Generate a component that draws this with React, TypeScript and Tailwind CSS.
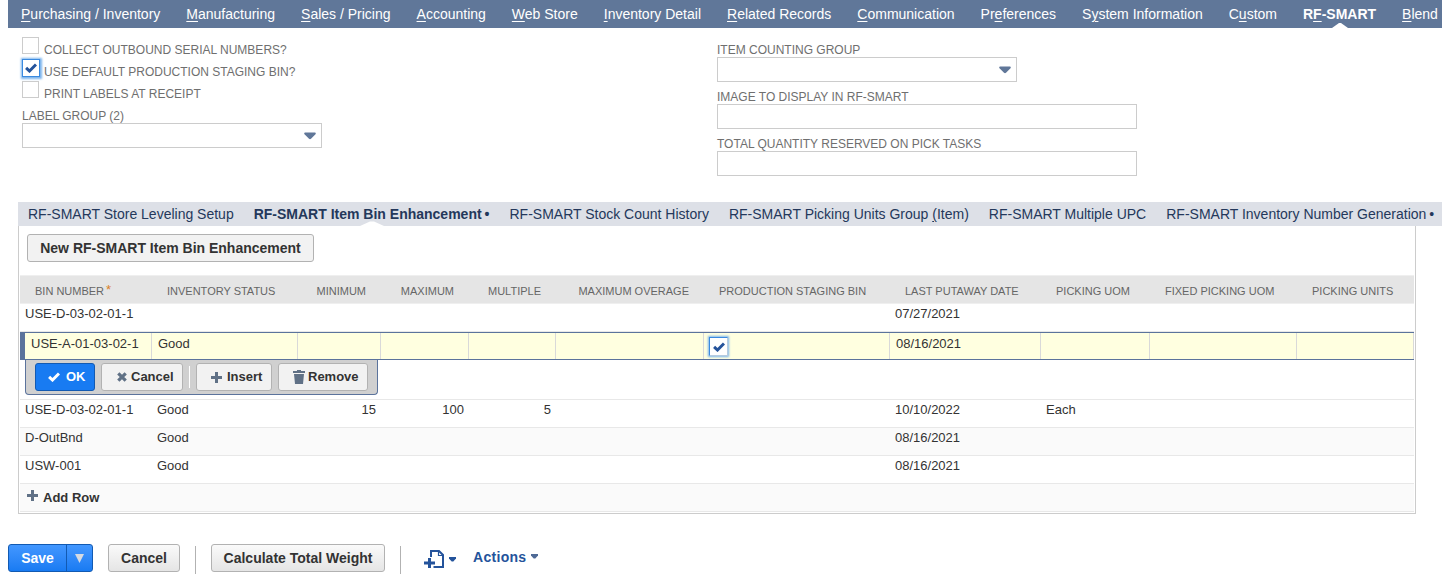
import React from "react";

const NAV: { pre: string; key: string; post: string; active?: boolean }[] = [
  { pre: "", key: "P", post: "urchasing / Inventory" },
  { pre: "", key: "M", post: "anufacturing" },
  { pre: "", key: "S", post: "ales / Pricing" },
  { pre: "", key: "A", post: "ccounting" },
  { pre: "", key: "W", post: "eb Store" },
  { pre: "", key: "I", post: "nventory Detail" },
  { pre: "", key: "R", post: "elated Records" },
  { pre: "", key: "C", post: "ommunication" },
  { pre: "Pr", key: "e", post: "ferences" },
  { pre: "S", key: "y", post: "stem Information" },
  { pre: "C", key: "u", post: "stom" },
  { pre: "R", key: "F", post: "-SMART", active: true },
  { pre: "", key: "B", post: "lend" },
];

const COLS =
  "grid grid-cols-[132px_146px_83px_88px_87px_148px_186px_151px_109px_147px_117px]";

const HEADERS = [
  "BIN NUMBER",
  "INVENTORY STATUS",
  "MINIMUM",
  "MAXIMUM",
  "MULTIPLE",
  "MAXIMUM OVERAGE",
  "PRODUCTION STAGING BIN",
  "LAST PUTAWAY DATE",
  "PICKING UOM",
  "FIXED PICKING UOM",
  "PICKING UNITS",
];

const isNumeric = (i: number) => i >= 2 && i <= 5;

function Check({ className = "" }: { className?: string }) {
  return (
    <svg width="12" height="10" viewBox="0 0 12 10" className={className}>
      <path d="M1.1 4.800 L4.5 8 L11 1.500" fill="none" stroke="currentColor" strokeWidth="3" />
    </svg>
  );
}

function Plus() {
  return (
    <svg width="11" height="11" viewBox="0 0 11 11" className="text-[#607186]">
      <path d="M4 0h3v4h4v3H7v4H4V7H0V4h4z" fill="currentColor" />
    </svg>
  );
}

function Caret() {
  return (
    <svg width="12" height="8" viewBox="0 0 12 8">
      <path d="M0.8 0.500h10.400q1 .6 .3 1.800L7 6.800q-1 .9-2 0L.5 2.300Q-.2 1.100 .8 .5z" fill="#607799" />
    </svg>
  );
}

function SmallCaret({ color }: { color: string }) {
  return (
    <svg width="7" height="5" viewBox="0 0 7 5">
      <path d="M0 0h7v1.6L4.3 4.6H2.7L0 1.6z" fill={color} />
    </svg>
  );
}

function CheckField({ label, checked }: { label: string; checked?: boolean }) {
  return (
    <div className="flex h-[22px] items-start">
      <span
        className={
          checked
            ? "flex h-[18px] w-[18px] items-center justify-center border border-[#3a8ae0] bg-white text-[#24539b] shadow-[0_0_2px_1.5px_#7db4ec]"
            : "h-[17px] w-[17px] border border-[#ccc] bg-white"
        }
      >
        {checked && <Check />}
      </span>
      <span className={`mt-[6px] text-[12px] leading-[15px] ${checked ? "ml-[4px]" : "ml-[5px]"}`}>{label}</span>
    </div>
  );
}

function Field({ label, select }: { label: string; select?: boolean }) {
  return (
    <div className="flex flex-col">
      <span className="h-[15px] text-[12px] leading-[17px]">{label}</span>
      <span
        className={
          select
            ? "flex h-[25px] w-[300px] items-center justify-end border border-[#ccc] pr-[5px]"
            : "h-[25px] w-[420px] border border-[#ccc]"
        }
      >
        {select && <Caret />}
      </span>
    </div>
  );
}

function Row({ cells, shade }: { cells: string[]; shade?: boolean }) {
  return (
    <div
      className={`${COLS} h-[28px] border-b border-[#e8e8e8] text-[13px] leading-[15px] text-[#333] ${
        shade ? "bg-[#fafafa]" : ""
      }`}
    >
      {cells.map((c, i) => (
        <span key={i} className={isNumeric(i) ? "pr-[5px] pt-[2px] text-right" : "pl-[5px] pt-[2px]"}>
          {c}
        </span>
      ))}
    </div>
  );
}

function ToolButton({ className, children }: { className: string; children: React.ReactNode }) {
  return (
    <button
      className={`flex h-[28px] items-center rounded-[3px] border border-[#b2b2b2] bg-[#f2f2f2] text-[13px] font-bold text-[#333] ${className}`}
    >
      {children}
    </button>
  );
}

function MainButton({ className, children }: { className: string; children: React.ReactNode }) {
  return (
    <button
      className={`h-[28px] rounded-[3px] border border-[#b2b2b2] bg-linear-to-b from-[#fafafa] to-[#e5e5e5] text-[14px] font-bold text-[#333] ${className}`}
    >
      {children}
    </button>
  );
}

const ACTIVE = ["USE-A-01-03-02-1", "Good", "", "", "", "", "check", "08/16/2021", "", "", ""];

export default function App() {
  return (
    <div className="h-[582px] w-[1442px] overflow-hidden bg-white font-['Liberation_Sans',Arial,sans-serif] text-[#6f6f6f]">
      <nav className="ml-2 flex h-7 gap-[26px] whitespace-nowrap bg-[#607799] pl-[13px] text-[14px] leading-[28px] text-white">
        {NAV.map((n) => (
          <a key={n.key + n.post} className={`relative ${n.active ? "font-bold" : ""}`}>
            {n.pre}
            <span className="underline underline-offset-2">{n.key}</span>
            {n.post}
            {n.active && (
              <svg width="16" height="5" viewBox="0 0 16 5" className="absolute bottom-0 left-[29px]">
                <path d="M0 5L7 0h2l7 5z" fill="#fff" />
              </svg>
            )}
          </a>
        ))}
      </nav>

      <section className="flex h-[174px] pl-[22px]">
        <div className="w-[695px] pt-[9px]">
          <CheckField label="COLLECT OUTBOUND SERIAL NUMBERS?" />
          <CheckField label="USE DEFAULT PRODUCTION STAGING BIN?" checked />
          <CheckField label="PRINT LABELS AT RECEIPT" />
          <div className="pt-[5px]">
            <Field label="LABEL GROUP (2)" select />
          </div>
        </div>
        <div className="flex flex-col gap-[7px] pt-[14px]">
          <Field label="ITEM COUNTING GROUP" select />
          <Field label="IMAGE TO DISPLAY IN RF-SMART" />
          <Field label="TOTAL QUANTITY RESERVED ON PICK TASKS" />
        </div>
      </section>

      <div className="ml-[18px] flex h-6 gap-5 whitespace-nowrap bg-[#dde0e7] pl-[10px] text-[14px] leading-[24px] text-[#24385b]">
        <a>RF-SMART Store Leveling Setup</a>
        <a className="relative pr-px font-bold">
          RF-SMART Item Bin Enhancement<span className="pl-[3px]">•</span>
          <svg width="24" height="5" viewBox="0 0 24 5" className="absolute bottom-0 left-[106px]">
            <path d="M0 5L10 0.4h4L24 5z" fill="#fff" />
          </svg>
        </a>
        <a className="-ml-px">RF-SMART Stock Count History</a>
        <a>
          RF-SMART Picking Units Group <span className="underline underline-offset-2">(</span>Item)
        </a>
        <a>RF-SMART Multiple UPC</a>
        <a>
          RF-SMART Inventory Number Generation<span className="pl-[3px]">•</span>
        </a>
      </div>

      <section className="ml-[18px] h-[288px] w-[1398px] border-x border-b border-[#ccc] px-[1px]">
        <div className="h-[49px] pl-[7px] pt-[8px]">
          <button className="h-[28px] w-[287px] rounded-[3px] border border-[#b2b2b2] bg-[#f2f2f2] text-[14px] font-bold text-[#333]">
            New RF-SMART Item Bin Enhancement
          </button>
        </div>
        <div
          className={`${COLS} h-[29px] border-y border-[#efefef] bg-[#e5e5e5] text-[11px] leading-[13px] text-[#666]`}
        >
          {HEADERS.map((h, i) => (
            <span
              key={h}
              className={`whitespace-nowrap pt-[9px] ${
                isNumeric(i) ? "pr-[15px] text-right" : "flex items-start pl-[15px]"
              }`}
            >
              {h}
              {i === 0 && <span className="-mt-[2px] pl-[2px] text-[13px] leading-[13px] text-[#d98026]">*</span>}
            </span>
          ))}
        </div>
        <Row cells={["USE-D-03-02-01-1", "", "", "", "", "", "", "07/27/2021", "", "", ""]} />
        <div
          className={`${COLS} h-[28px] w-[1394px] border-y border-[#5b739c] bg-[#ffffe0] text-[13px] leading-[15px] text-[#333]`}
        >
          {ACTIVE.map((c, i) => (
            <span
              key={i}
              className={`whitespace-nowrap border-r border-[#d9d9d9] pt-[3px] ${
                i === 0 ? "border-l-[5px] border-l-[#5b739c] pl-[6px]" : "pl-[6px]"
              }`}
            >
              {c === "check" ? (
                <span className="mt-px -ml-px flex h-[19px] w-[19px] items-center justify-center border border-[#b5cbe0] border-l-[#3a8ae0] border-t-[#3a8ae0] bg-white text-[#24539b] shadow-[0_0_2px_1px_#7db4ec]">
                  <Check />
                </span>
              ) : (
                c
              )}
            </span>
          ))}
        </div>
        <div className="h-[40px] border-b border-[#e8e8e8]">
          <div className="ml-[5px] flex h-[35px] w-[353px] rounded-b-[4px] border border-t-0 border-[#5b739c] bg-[#d0d0d0] pl-[9px] pt-[3px]">
            <button className="flex h-[28px] w-[60px] items-center rounded-[3px] border border-[#125ab2] bg-[#187bf2] pl-[12px] text-[13px] font-bold text-white">
              <Check />
              <span className="ml-[6px]">OK</span>
            </button>
            <ToolButton className="ml-[6px] w-[82px] pl-[15px]">
              <svg width="10" height="10" viewBox="0 0 10 10">
                <path d="M1.3 1.3L8.7 8.7M8.7 1.3L1.3 8.7" stroke="#607186" strokeWidth="3.2" />
              </svg>
              <span className="ml-[4px]">Cancel</span>
            </ToolButton>
            <span className="ml-[6px] mt-[3px] h-[22px] w-px bg-white" />
            <ToolButton className="ml-[6px] w-[76px] pl-[14px]">
              <Plus />
              <span className="ml-[5px]">Insert</span>
            </ToolButton>
            <ToolButton className="ml-[6px] w-[90px] pl-[14px]">
              <svg width="12" height="14" viewBox="0 0 12 14" fill="#607186">
                <path d="M4 0h4v1h4v2H0V1h4zM1 4h10l-1 10H2z" />
              </svg>
              <span className="ml-[3px]">Remove</span>
            </ToolButton>
          </div>
        </div>
        <Row cells={["USE-D-03-02-01-1", "Good", "15", "100", "5", "", "", "10/10/2022", "Each", "", ""]} />
        <Row cells={["D-OutBnd", "Good", "", "", "", "", "", "08/16/2021", "", "", ""]} shade />
        <Row cells={["USW-001", "Good", "", "", "", "", "", "08/16/2021", "", "", ""]} />
        <div className="flex h-[28px] border-b border-[#e8e8e8] bg-[#fafafa] pl-[7px] pt-[6px] text-[13px] font-bold leading-[15px] text-[#333]">
          <Plus />
          <span className="ml-[5px]">Add Row</span>
        </div>
      </section>

      <footer className="flex pl-2 pt-[30px]">
        <div className="flex h-[28px] w-[85px] overflow-hidden rounded-[3px] border border-[#125ab2] bg-linear-to-b from-[#4297ff] to-[#187bf2] text-[14px] font-bold text-white">
          <button className="w-[58px] border-r border-[#125ab2]">Save</button>
          <button className="flex flex-1 items-center justify-center">
            <svg width="9" height="9" viewBox="0 0 9 9">
              <path d="M0 0h9L4.5 9z" fill="#d5dae2" />
            </svg>
          </button>
        </div>
        <MainButton className="ml-[15px] w-[72px]">Cancel</MainButton>
        <span className="ml-[15px] mt-[2px] h-[28px] w-px bg-[#b2b2b2]" />
        <MainButton className="ml-[15px] w-[174px]">Calculate Total Weight</MainButton>
        <span className="ml-[15px] mt-[2px] h-[28px] w-px bg-[#b2b2b2]" />
        <div className="ml-[23px] mt-[6px] flex">
          <svg width="20" height="18" viewBox="0 0 20 18">
            <path d="M7 7V1h8l4 4v12H9.5" fill="none" stroke="#24539b" strokeWidth="2" />
            <path d="M14.500 1v4.500h4.500" fill="none" stroke="#24539b" strokeWidth="1.2" />
            <path d="M0 11.500h4V8h3v3.500h4v3H7V18H4v-3.500H0z" fill="#24539b" />
          </svg>
          <span className="ml-[5px] mt-[7px]">
            <SmallCaret color="#24539b" />
          </span>
        </div>
        <a className="ml-[17px] mt-[5px] flex text-[14px] font-bold leading-[16px] tracking-[0.3px] text-[#24539b]">
          Actions
          <span className="ml-[5px] mt-[5px]">
            <SmallCaret color="#4f6a96" />
          </span>
        </a>
      </footer>
    </div>
  );
}
